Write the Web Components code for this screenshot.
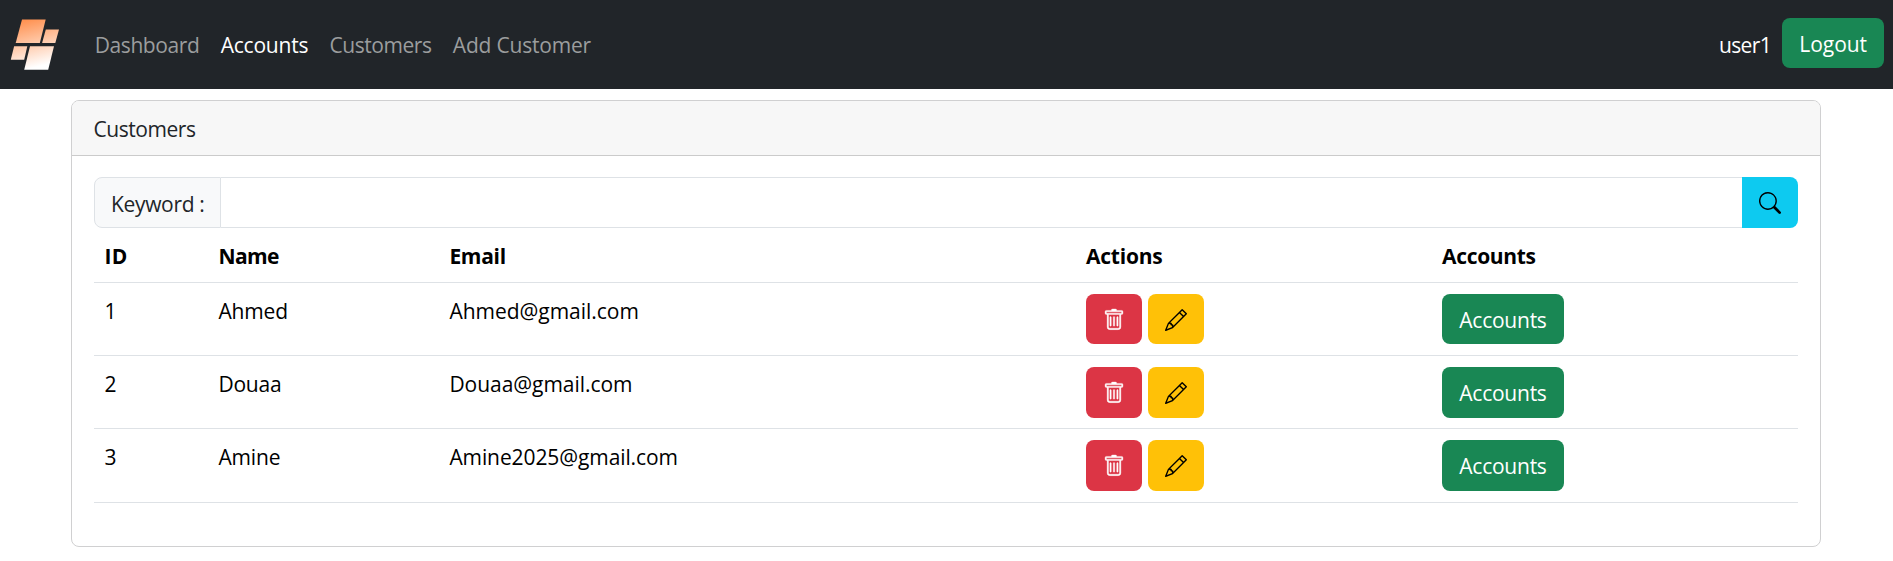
<!DOCTYPE html>
<html lang="en">
<head>
<meta charset="utf-8">
<title>Customers</title>
<style>
body{margin:0;background:#fff;color:#212529;font:21px/32px "Open Sans","Noto Sans",sans-serif}
</style>
</head>
<body>
<customers-page></customers-page>
<script>
const define = (name, html) => customElements.define(name, class extends HTMLElement {
  connectedCallback() {
    if (this.shadowRoot) return;
    const t = document.createElement('template');
    t.innerHTML = html(this);
    this.attachShadow({mode: 'open'}).append(t.content.cloneNode(true));
  }
});

define('app-logo', () => `
<style>:host{display:block;width:70px;height:89px}svg{display:block}</style>
<svg width="70" height="89" viewBox="0 0 70 89">
  <defs><linearGradient id="g" gradientUnits="userSpaceOnUse" x1="28" y1="19" x2="40" y2="66">
    <stop offset="0" stop-color="#ff9150"/><stop offset="1" stop-color="#fff"/></linearGradient></defs>
  <g fill="url(#g)">
    <path d="M22 19.5H45.7L39.8 43H15.7z"/><path d="M45.8 29.6H59L55.3 43H42.1z"/>
    <path d="M14.1 46.3H27.3L24.2 59.8H10.8z"/><path d="M30 46.3H54L48.2 69.8H24.2z"/>
  </g>
</svg>`);

const ICONS = {
  trash: '<path stroke="currentColor" stroke-width=".25" d="M5.5 5.5A.5.5 0 0 1 6 6v6a.5.5 0 0 1-1 0V6a.5.5 0 0 1 .5-.5m2.5 0a.5.5 0 0 1 .5.5v6a.5.5 0 0 1-1 0V6a.5.5 0 0 1 .5-.5m3 .5a.5.5 0 0 0-1 0v6a.5.5 0 0 0 1 0z"/><path stroke="currentColor" stroke-width=".25" d="M14.5 3a1 1 0 0 1-1 1H13v9a2 2 0 0 1-2 2H5a2 2 0 0 1-2-2V4h-.5a1 1 0 0 1-1-1V2a1 1 0 0 1 1-1H6a1 1 0 0 1 1-1h2a1 1 0 0 1 1 1h3.5a1 1 0 0 1 1 1zM4.118 4 4 4.059V13a1 1 0 0 0 1 1h6a1 1 0 0 0 1-1V4.059L11.882 4zM2.5 3h11V2h-11z"/>',
  pencil: '<path d="M12.146.146a.5.5 0 0 1 .708 0l3 3a.5.5 0 0 1 0 .708l-10 10a.5.5 0 0 1-.168.11l-5 2a.5.5 0 0 1-.65-.65l2-5a.5.5 0 0 1 .11-.168zM11.207 2.5 13.5 4.793 14.793 3.5 12.5 1.207zm1.586 3L10.5 3.207 4 9.707V10h.5a.5.5 0 0 1 .5.5v.5h.5a.5.5 0 0 1 .5.5v.5h.293zm-9.761 5.175-.106.106-1.528 3.821 3.821-1.528.106-.106A.5.5 0 0 1 5 12.5V12h-.5a.5.5 0 0 1-.5-.5V11h-.5a.5.5 0 0 1-.468-.325"/>',
  search: '<path d="M11.742 10.344a6.5 6.5 0 1 0-1.397 1.398h-.001q.044.06.098.115l3.85 3.85a1 1 0 0 0 1.415-1.414l-3.85-3.85a1 1 0 0 0-.115-.1zM12 6.5a5.5 5.5 0 1 1-11 0 5.5 5.5 0 0 1 11 0"/>'
};
define('ui-icon', el => `
<style>:host{display:block;width:22px;height:22px}svg{display:block;overflow:visible}</style>
<svg width="22" height="22" viewBox="0 0 16 16" fill="currentColor">${ICONS[el.getAttribute('name')]}</svg>`);

define('ui-button', () => `
<style>
:host{display:block;box-sizing:border-box;height:var(--button-height,50px);color:#fff;background:#198754;border-radius:8px;overflow:hidden}
:host([kind=danger]){background:#dc3545}
:host([kind=warning]){background:#ffc107;color:#000}
:host([kind=info]){background:#0dcaf0;color:#000;border-radius:0 8px 8px 0}
button{all:unset;box-sizing:border-box;display:flex;align-items:flex-start;width:100%;height:100%;padding:10px 0 0 17.33px;font:inherit;color:inherit;white-space:nowrap}
:host([kind=danger]) button,:host([kind=warning]) button,:host([kind=info]) button{padding-top:15px;padding-left:17px}
</style><button type="button"><slot></slot></button>`);

define('nav-bar', () => `
<style>
:host{display:flex;height:89px;background:#212529;color:#fff;box-sizing:border-box;padding-right:9px;align-items:flex-start}
nav{display:flex;gap:21.33px;margin:29px 0 0 24.7px;flex:1}
a{color:#9b9d9e;text-decoration:none}a.active{color:#fff}
.user{margin:29px 11px 0 0}ui-button{margin-top:18px;width:102px}
</style>
<app-logo></app-logo>
<nav><a><fit-text w="104.7">Dashboard</fit-text></a><a class="active"><fit-text w="87.5">Accounts</fit-text></a><a><fit-text w="102">Customers</fit-text></a><a><fit-text w="138">Add Customer</fit-text></a></nav>
<span class="user"><fit-text w="52">user1</fit-text></span>
<ui-button><fit-text w="67.7">Logout</fit-text></ui-button>`);

define('ui-card', () => `
<style>
:host{display:block;box-sizing:border-box;border:1px solid #d0d0d1;border-radius:8px;overflow:hidden;background:#fff}
header{box-sizing:border-box;height:55px;background:#f7f7f7;border-bottom:1px solid #cbcbcb;padding:12px 21.5px 0}
main{padding:21px 22px 43px}
</style><header><slot name="title"></slot></header><main><slot></slot></main>`);

define('search-group', () => `
<style>
:host{display:flex;height:51px;--button-height:51px}
label{box-sizing:border-box;width:127px;padding:10px 0 0 16px;background:#f8f9fa;border:1px solid #dee2e6;border-radius:8px 0 0 8px}
input{all:unset;box-sizing:border-box;flex:1;background:#fff;border:solid #dee2e6;border-width:1px 0}
ui-button{width:56px}
</style>
<label><fit-text w="93.5">Keyword :</fit-text></label><input type="text" aria-label="Keyword"><ui-button kind="info"><ui-icon name="search"></ui-icon></ui-button>`);

define('table-row', () => `
<style>
:host{display:grid;grid-template-columns:113px 231px 637px 356px 367px;box-sizing:border-box;height:73px;border-bottom:1px solid #dee2e6;color:#000}
:host([head]){height:55px;font-weight:700}
:host([tall]){height:74px}
::slotted(*){padding:12px 0 0 11px}
::slotted(:nth-child(1)){padding-left:10.4px}
::slotted(:nth-child(2)),::slotted(:nth-child(3)){padding-left:11.4px}
</style><slot></slot>`);

define('row-actions', () => `
<style>:host{display:flex;gap:6px;margin-top:-1px}ui-button{width:56px}</style>
<ui-button kind="danger"><ui-icon name="trash"></ui-icon></ui-button><ui-button kind="warning"><ui-icon name="pencil"></ui-icon></ui-button>`);

define('accounts-link', () => `
<style>:host{display:block;margin-top:-1px}ui-button{width:122px}</style>
<ui-button><fit-text w="87.3">Accounts</fit-text></ui-button>`);

const customers = [
  [1, 'Ahmed', 69.5, 'Ahmed@gmail.com', 189.5, 50],
  [2, 'Douaa', 63, 'Douaa@gmail.com', 183, 51],
  [3, 'Amine', 62, 'Amine2025@gmail.com', 228.5, 51]
];
define('customer-table', () => `
<style>:host{display:block}</style>
<table-row head><div><fit-text w="23.5">ID</fit-text></div><div><fit-text w="60.5">Name</fit-text></div><div><fit-text w="56.5">Email</fit-text></div><div><fit-text w="76.5">Actions</fit-text></div><div><fit-text w="93.7">Accounts</fit-text></div></table-row>
${customers.map(([id, name, nw, mail, mw, h], i) => `<table-row ${i === 2 ? 'tall' : ''} style="--button-height:${h}px"><div>${id}</div><div><fit-text w="${nw}">${name}</fit-text></div><div><fit-text w="${mw}">${mail}</fit-text></div><div><row-actions></row-actions></div><div><accounts-link></accounts-link></div></table-row>`).join('')}`);

define('customers-page', () => `
<style>:host{display:block}ui-card{width:1750px;margin:11px 0 0 71px;height:447px}</style>
<nav-bar></nav-bar>
<ui-card><fit-text slot="title" w="102">Customers</fit-text><search-group></search-group><customer-table></customer-table></ui-card>`);

// Text that spreads its tracking so that it takes up the advance width "w".
customElements.define('fit-text', class extends HTMLElement {
  connectedCallback() {
    if (this.shadowRoot) return;
    this.attachShadow({mode: 'open'}).innerHTML =
      '<style>:host{display:inline-block;white-space:nowrap;vertical-align:top}</style><span><slot></slot></span>';
    const w = +this.getAttribute('w');
    const span = this.shadowRoot.querySelector('span');
    const natural = span.getBoundingClientRect().width;
    span.style.letterSpacing = (w - natural) / this.textContent.length + 'px';
    this.style.width = w + 'px';
  }
});
</script>
</body>
</html>
